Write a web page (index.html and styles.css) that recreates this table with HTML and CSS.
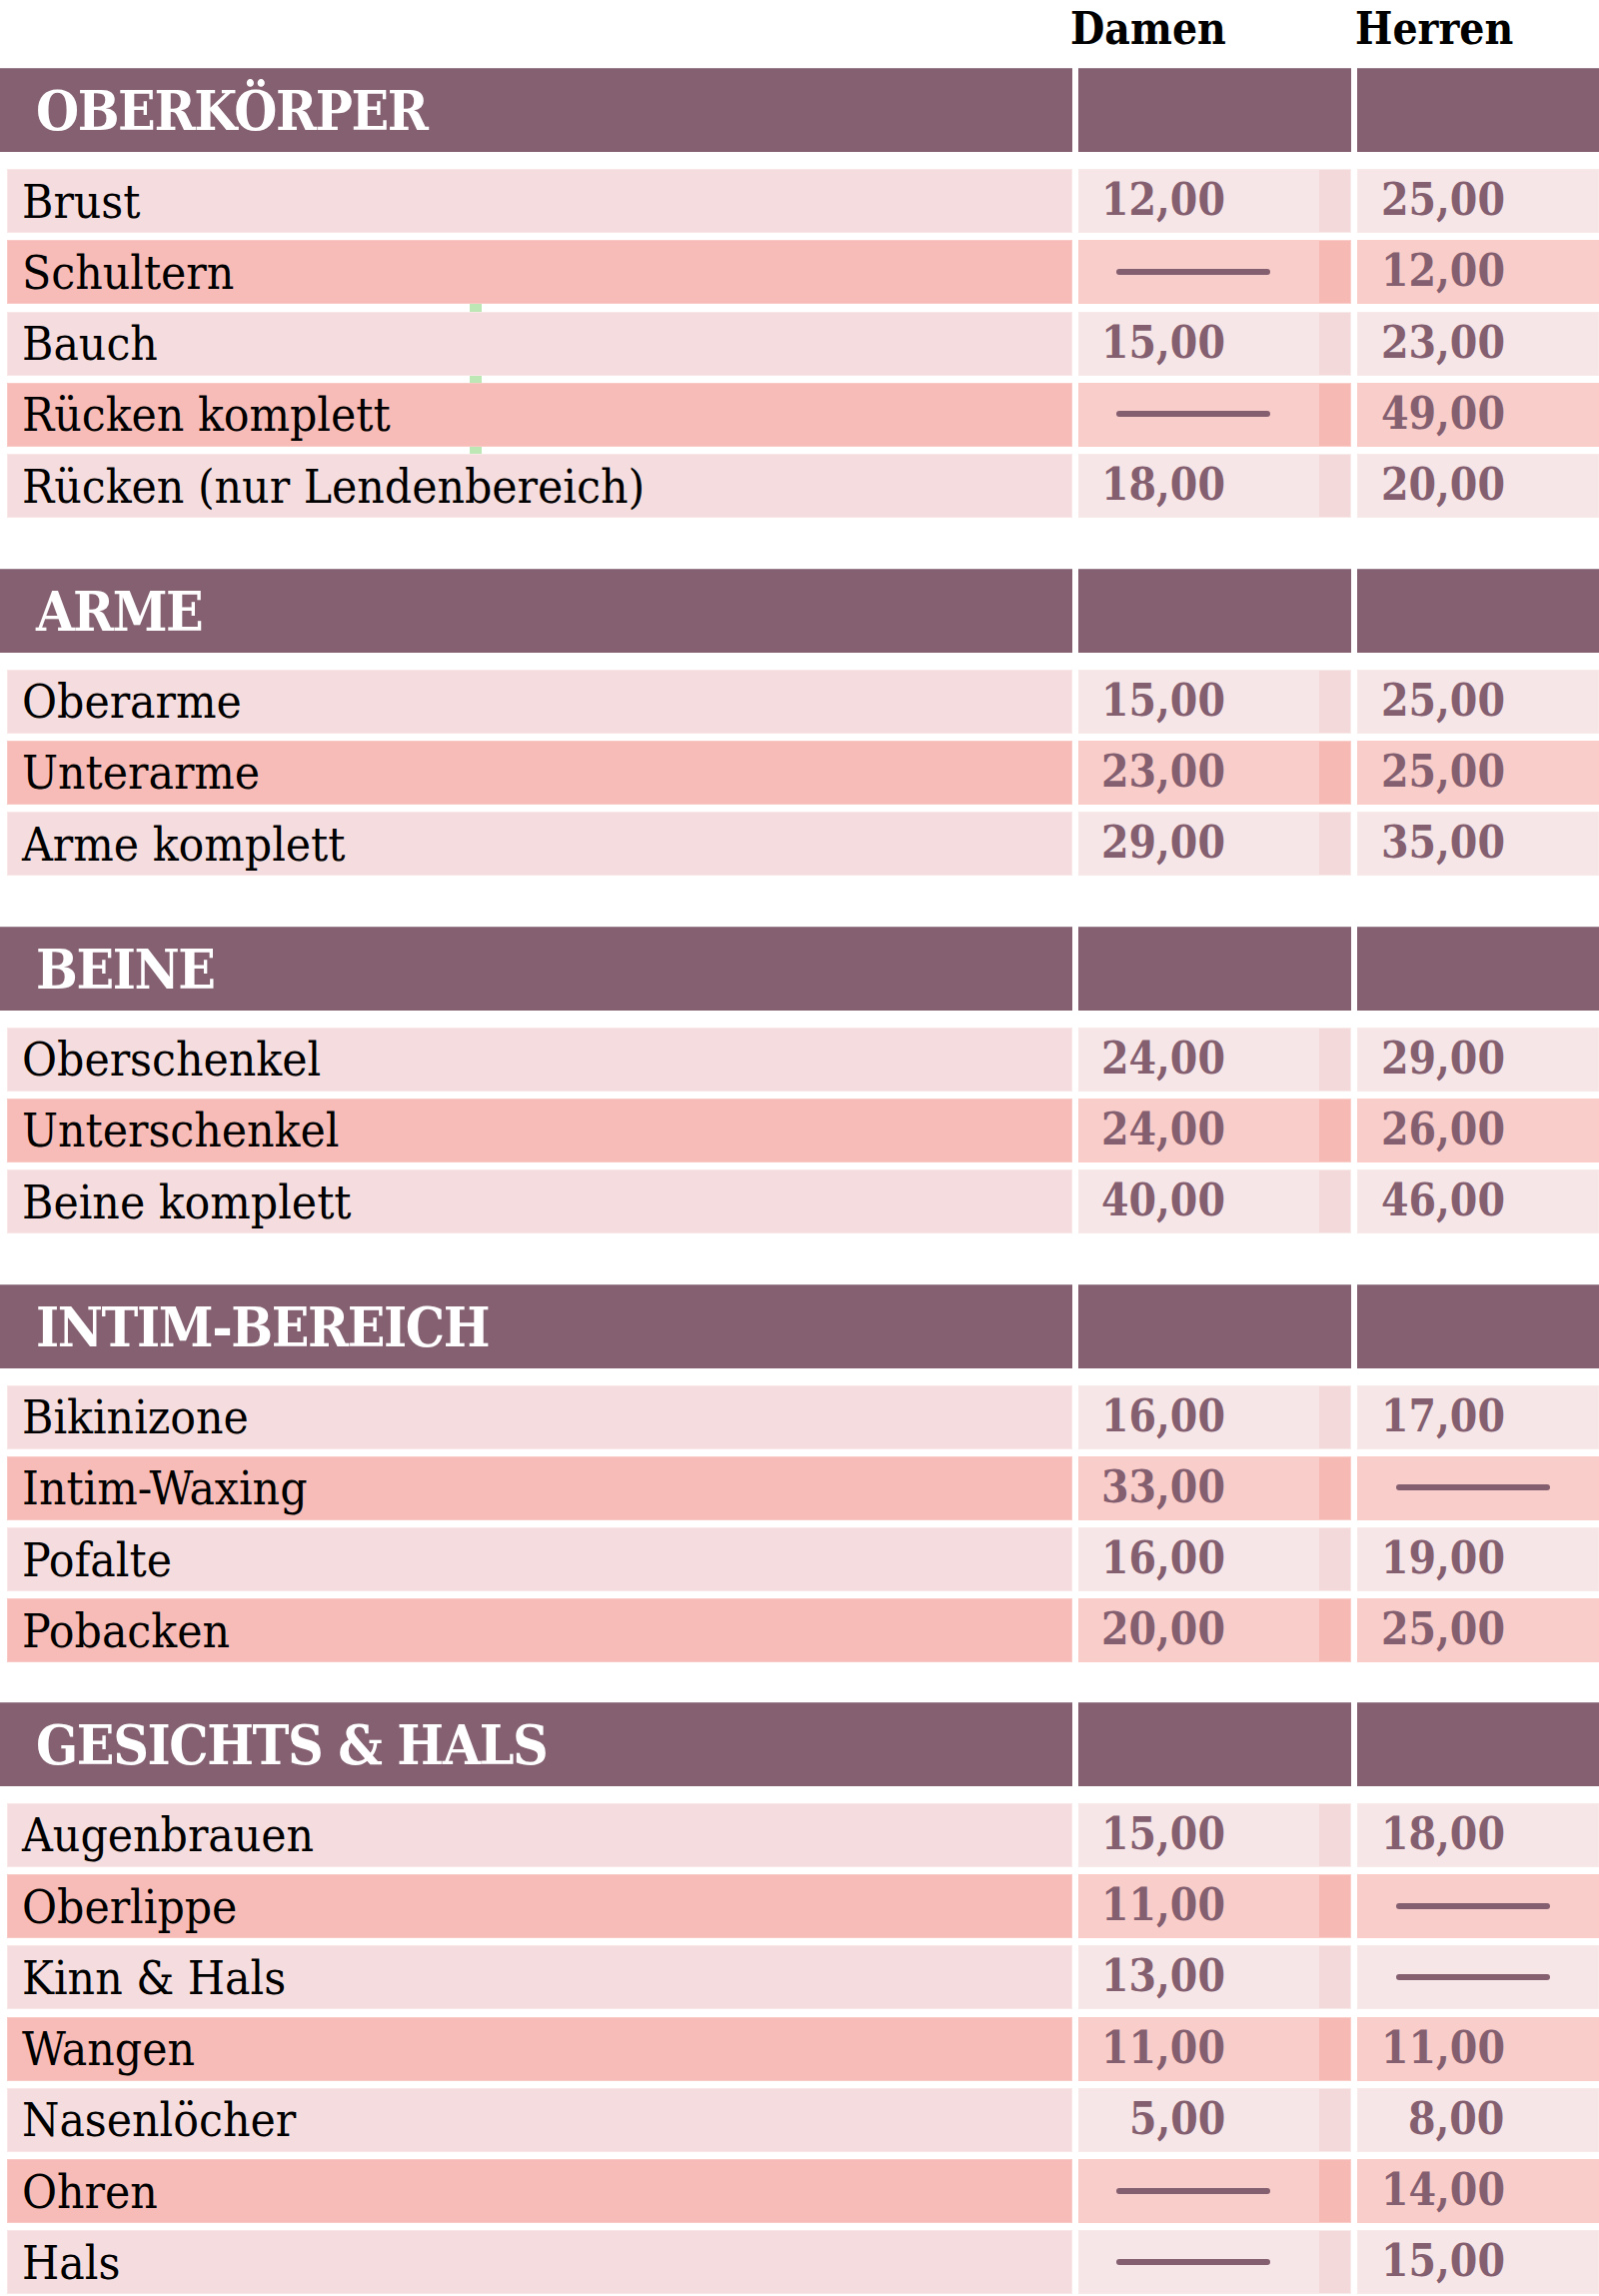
FILE: index.html
```html
<!DOCTYPE html>
<html lang="de">
<head>
<meta charset="utf-8">
<title>Preisliste Waxing</title>
<link rel="stylesheet" href="styles.css">
</head>
<body>
<div class="sheet">
  <div class="colheads">
    <div></div>
    <div class="colhead colhead-damen">Damen</div>
    <div class="colhead colhead-herren">Herren</div>
  </div>

  <section class="group">
    <div class="head head-title">OBERKÖRPER</div><div class="head"></div><div class="head"></div>
    <div class="label light">Brust</div><div class="price d light">12,00</div><div class="price h light">25,00</div>
    <div class="label dark mark">Schultern</div><div class="price d dark"><span class="dash"></span></div><div class="price h dark">12,00</div>
    <div class="label light mark">Bauch</div><div class="price d light">15,00</div><div class="price h light">23,00</div>
    <div class="label dark mark">Rücken komplett</div><div class="price d dark"><span class="dash"></span></div><div class="price h dark">49,00</div>
    <div class="label light">Rücken (nur Lendenbereich)</div><div class="price d light">18,00</div><div class="price h light">20,00</div>
  </section>

  <section class="group">
    <div class="head head-title">ARME</div><div class="head"></div><div class="head"></div>
    <div class="label light">Oberarme</div><div class="price d light">15,00</div><div class="price h light">25,00</div>
    <div class="label dark">Unterarme</div><div class="price d dark">23,00</div><div class="price h dark">25,00</div>
    <div class="label light">Arme komplett</div><div class="price d light">29,00</div><div class="price h light">35,00</div>
  </section>

  <section class="group">
    <div class="head head-title">BEINE</div><div class="head"></div><div class="head"></div>
    <div class="label light">Oberschenkel</div><div class="price d light">24,00</div><div class="price h light">29,00</div>
    <div class="label dark">Unterschenkel</div><div class="price d dark">24,00</div><div class="price h dark">26,00</div>
    <div class="label light">Beine komplett</div><div class="price d light">40,00</div><div class="price h light">46,00</div>
  </section>

  <section class="group group-tight">
    <div class="head head-title">INTIM-BEREICH</div><div class="head"></div><div class="head"></div>
    <div class="label light">Bikinizone</div><div class="price d light">16,00</div><div class="price h light">17,00</div>
    <div class="label dark">Intim-Waxing</div><div class="price d dark">33,00</div><div class="price h dark"><span class="dash"></span></div>
    <div class="label light">Pofalte</div><div class="price d light">16,00</div><div class="price h light">19,00</div>
    <div class="label dark">Pobacken</div><div class="price d dark">20,00</div><div class="price h dark">25,00</div>
  </section>

  <section class="group group-last">
    <div class="head head-title">GESICHTS &amp; HALS</div><div class="head"></div><div class="head"></div>
    <div class="label light">Augenbrauen</div><div class="price d light">15,00</div><div class="price h light">18,00</div>
    <div class="label dark">Oberlippe</div><div class="price d dark">11,00</div><div class="price h dark"><span class="dash"></span></div>
    <div class="label light">Kinn &amp; Hals</div><div class="price d light">13,00</div><div class="price h light"><span class="dash"></span></div>
    <div class="label dark">Wangen</div><div class="price d dark">11,00</div><div class="price h dark">11,00</div>
    <div class="label light">Nasenlöcher</div><div class="price d light short">5,00</div><div class="price h light short">8,00</div>
    <div class="label dark">Ohren</div><div class="price d dark"><span class="dash"></span></div><div class="price h dark">14,00</div>
    <div class="label light">Hals</div><div class="price d light"><span class="dash"></span></div><div class="price h light">15,00</div>
  </section>
</div>
</body>
</html>
```

FILE: styles.css
```css
* { box-sizing: border-box; }

html, body {
  margin: 0;
  padding: 0;
  background: #ffffff;
}

body {
  font-family: "DejaVu Serif Condensed", "DejaVu Serif", "Liberation Serif", serif;
  width: 1600px;
}

.sheet {
  width: 1600px;
}

.colheads {
  display: grid;
  grid-template-columns: 1073px 273px 242px;
  column-gap: 6px;
  height: 68px;
}

.colhead {
  font-weight: bold;
  font-size: 44px;
  line-height: 58px;
  color: #000;
  white-space: nowrap;
}

.colhead-damen { margin-left: -8px; }
.colhead-herren { margin-left: -2px; }

.group {
  display: grid;
  grid-template-columns: 1073px 273px 242px;
  grid-template-rows: 93.75px;
  grid-auto-rows: 64px;
  column-gap: 6px;
  row-gap: 7.25px;
  margin-bottom: 50.5px;
}

.group-tight { margin-bottom: 39.5px; }
.group-last { margin-bottom: 0; }

.head {
  grid-row: 1;
  background: #846071;
  height: 84px;
  margin-bottom: 9.75px;
  border-top: 1px solid #9c8290;
}

.head-title {
  display: flex;
  align-items: center;
  padding-left: 36px;
  color: #ffffff;
  font-weight: bold;
  font-size: 55px;
  letter-spacing: -1.4px;
  white-space: nowrap;
}

.label {
  display: flex;
  align-items: center;
  margin-left: 7px;
  padding-left: 14px;
  font-size: 47.5px;
  color: #000;
  white-space: nowrap;
  position: relative;
}

.label.light {
  background: #f5dddf;
  border: 1px solid #f9e7e8;
}

.label.dark {
  background: #f7bcb7;
  border: 1px solid #f9c9c5;
}

.mark::after {
  content: "";
  position: absolute;
  left: 462px;
  top: 100%;
  width: 12px;
  height: 8px;
  margin-top: 1px;
  background: #bde8b6;
}

.price {
  display: flex;
  align-items: center;
  padding-bottom: 3px;
  font-weight: bold;
  font-size: 44px;
  color: #845f70;
  white-space: nowrap;
}

.price.d { padding-left: 22px; }
.price.h { padding-left: 23px; }
.price.short { padding-left: 50px; }

.price.d.light {
  background: linear-gradient(to right, #f7e6e7 calc(100% - 31px), #f4d9db 0);
  border: 1px solid #f9eaea;
}

.price.d.dark {
  background: linear-gradient(to right, #f9cdca calc(100% - 31px), #f6b9b4 0);
  border: 1px solid #facdc9;
}

.price.h.light {
  background: #f7e6e7;
  border: 1px solid #f9eaea;
}

.price.h.dark {
  background: #f9cdca;
  border: 1px solid #facdc9;
}

.dash {
  display: block;
  width: 154px;
  height: 6px;
  margin-left: 15px;
  margin-top: 2px;
  border-radius: 3px;
  background: #845f70;
}
```
